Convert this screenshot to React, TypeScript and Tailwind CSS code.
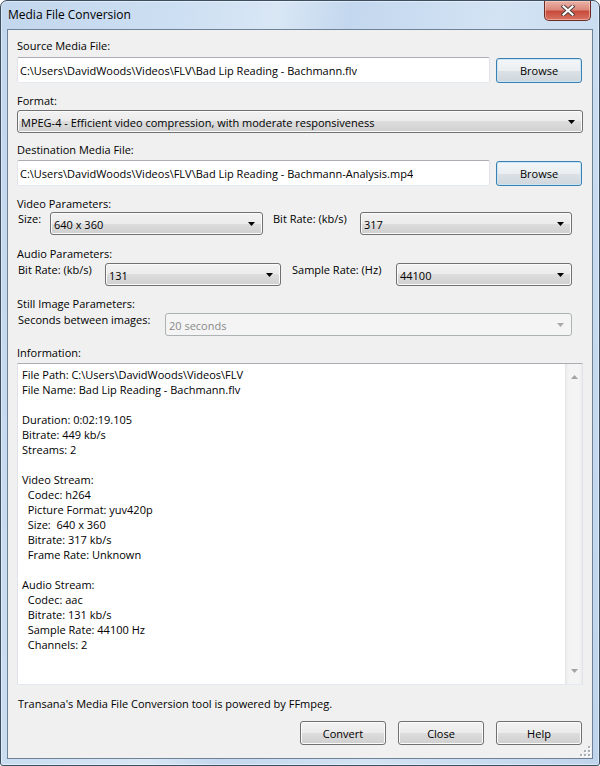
import clsx from "clsx";

const infoLines = [
  "File Path: C:\\Users\\DavidWoods\\Videos\\FLV",
  "File Name: Bad Lip Reading - Bachmann.flv",
  "",
  "Duration: 0:02:19.105",
  "Bitrate: 449 kb/s",
  "Streams: 2",
  "",
  "Video Stream:",
  "  Codec: h264",
  "  Picture Format: yuv420p",
  "  Size:  640 x 360",
  "  Bitrate: 317 kb/s",
  "  Frame Rate: Unknown",
  "",
  "Audio Stream:",
  "  Codec: aac",
  "  Bitrate: 131 kb/s",
  "  Sample Rate: 44100 Hz",
  "  Channels: 2",
];

function Arrow({ up, color }: { up?: boolean; color: string }) {
  return (
    <svg width="7" height="4" viewBox="0 0 7 4" className="shrink-0">
      <path d={up ? "M0 4h7L3.5 0z" : "M0 0h7L3.5 4z"} fill={color} />
    </svg>
  );
}

function Combo({ value, className, disabled }: { value: string; className?: string; disabled?: boolean }) {
  return (
    <div
      className={clsx(
        "flex h-[23px] items-center rounded-[3px] border pl-[3px] pr-[7px]",
        disabled
          ? "border-[#adb2b5] bg-[#f4f4f4] text-[#8a8a8a]"
          : "border-[#707070] bg-[linear-gradient(to_bottom,#f2f2f2_0%,#ebebeb_50%,#dddddd_50%,#cfcfcf_100%)] shadow-[inset_0_0_0_1px_#fbfbfb]",
        className
      )}
    >
      <span className="flex-1 truncate pt-[1px]">{value}</span>
      <Arrow color={disabled ? "#a9a9a9" : "#000"} />
    </div>
  );
}

function TextBox({ value }: { value: string }) {
  return (
    <div className="flex h-[26px] flex-1 items-center rounded-[2px] border border-[#e2e3ea] border-t-[#abadb3] border-b-[#e3e9ef] bg-white pl-[2px]">
      <span className="truncate">{value}</span>
    </div>
  );
}

function Button({ label, focused, className }: { label: string; focused?: boolean; className?: string }) {
  return (
    <div
      className={clsx(
        "flex h-[24px] w-[86px] items-center justify-center rounded-[3px] border",
        focused
          ? "border-[#3c7fb1] bg-[linear-gradient(to_bottom,#f4f7f9_0%,#eaeef1_50%,#dbe1e5_50%,#d0d7dc_100%)] shadow-[inset_0_0_0_1px_#c9e6f6]"
          : "border-[#707070] bg-[linear-gradient(to_bottom,#f2f2f2_0%,#ebebeb_50%,#dddddd_50%,#cfcfcf_100%)] shadow-[inset_0_0_0_1px_#fbfbfb]",
        className
      )}
    >
      {label}
    </div>
  );
}

function CloseBox() {
  return (
    <div className="mr-[8px] flex h-[20px] w-[47px] items-center justify-center rounded-b-[5px] border border-t-0 border-[#6b2a22] bg-[linear-gradient(to_bottom,#eab1a7_0%,#dc8a7c_45%,#c84c3c_55%,#d77262_100%)] shadow-[inset_0_0_0_1px_rgba(255,220,210,0.5)]">
      <svg width="14" height="11" viewBox="0 0 14 11">
        <path d="M2.5 1.5l9 8M11.5 1.5l-9 8" stroke="#4b3b39" strokeWidth="4" strokeLinecap="square" />
        <path d="M2.5 1.5l9 8M11.5 1.5l-9 8" stroke="#fff" strokeWidth="2.2" strokeLinecap="square" />
      </svg>
    </div>
  );
}

function Grip() {
  const dots = [
    [8, 0],
    [8, 4],
    [4, 4],
    [8, 8],
    [4, 8],
    [0, 8],
  ];
  return (
    <svg width="11" height="11" viewBox="0 0 11 11">
      {dots.map(([x, y]) => (
        <g key={`${x}-${y}`}>
          <rect x={x + 1} y={y + 1} width="2" height="2" fill="#fff" />
          <rect x={x} y={y} width="2" height="2" fill="#a9afb6" />
        </g>
      ))}
    </svg>
  );
}

export default function App() {
  return (
    <div className="h-[766px] w-[600px] bg-white font-['Segoe_UI','Open_Sans',sans-serif] text-[11px] leading-[15px] text-black">
      <div className="flex h-full w-full flex-col rounded-t-[7px] rounded-b-[3px] border border-[#3e4e61] bg-[linear-gradient(100deg,#c2d6ed_0%,#cddff2_25%,#d9e7f5_38%,#c3d7ee_48%,#d3e3f4_68%,#bfd4ec_100%)] shadow-[inset_0_0_0_1px_rgba(255,255,255,0.45)]">
        {/* title bar */}
        <div className="flex h-[28px] items-start justify-between">
          <span className="pl-[7px] pt-[6px] text-[12px]">Media File Conversion</span>
          <CloseBox />
        </div>

        {/* client area */}
        <div className="relative mx-[6px] mb-[6px] flex flex-1 flex-col border border-[#6f8197] bg-[#f0f0f0] px-[9px] pt-[8px]">
          <span>Source Media File:</span>
          <div className="mt-[4px] flex items-center gap-[6px]">
            <TextBox value="C:\Users\DavidWoods\Videos\FLV\Bad Lip Reading - Bachmann.flv" />
            <Button label="Browse" focused className="mr-[1px] h-[25px]" />
          </div>

          <span className="mt-[10px]">Format:</span>
          <Combo className="mt-[2px]" value="MPEG-4 - Efficient video compression, with moderate responsiveness" />

          <span className="mt-[9px]">Destination Media File:</span>
          <div className="mt-[3px] flex items-center gap-[6px]">
            <TextBox value="C:\Users\DavidWoods\Videos\FLV\Bad Lip Reading - Bachmann-Analysis.mp4" />
            <Button label="Browse" focused className="mr-[1px] h-[25px]" />
          </div>

          <span className="mt-[10px]">Video Parameters:</span>
          <div className="flex items-start">
            <span className="w-[33px] pl-[1px]">Size:</span>
            <Combo className="mt-[1px] w-[213px]" value="640 x 360" />
            <span className="ml-[10px] w-[87px]">Bit Rate: (kb/s)</span>
            <Combo className="mt-[1px] w-[212px]" value="317" />
          </div>

          <span className="mt-[11px]">Audio Parameters:</span>
          <div className="mt-[1px] flex items-start">
            <span className="w-[88px] pl-[1px]">Bit Rate: (kb/s)</span>
            <Combo className="mt-[1px] w-[176px]" value="131" />
            <span className="ml-[11px] w-[104px]">Sample Rate: (Hz)</span>
            <Combo className="mt-[1px] w-[176px]" value="44100" />
          </div>

          <span className="mt-[10px]">Still Image Parameters:</span>
          <div className="mt-[1px] flex items-start">
            <span className="w-[148px] pl-[1px]">Seconds between images:</span>
            <Combo className="mt-[1px] w-[407px]" value="20 seconds" disabled />
          </div>

          <span className="mt-[9px]">Information:</span>
          <div className="mt-[3px] flex h-[322px] border border-[#e2e3ea] border-t-[#abadb3] border-b-[#e3e9ef] bg-white">
            <div className="flex-1 whitespace-pre pl-[4px] pt-[3px]">
              {infoLines.map((line, i) => (
                <div key={i} className="h-[15px]">
                  {line}
                </div>
              ))}
            </div>
            <div className="flex w-[17px] flex-col items-center justify-between border-l border-[#e6e6e6] bg-[linear-gradient(to_right,#ececec,#f4f4f4_3px,#f4f4f4_13px,#ececec)] py-[11px]">
              <Arrow up color="#a4a4a4" />
              <Arrow color="#a4a4a4" />
            </div>
          </div>

          <span className="mt-[11px] pl-[1px]">Transana's Media File Conversion tool is powered by FFmpeg.</span>

          <div className="mt-[10px] flex justify-end gap-[12px] pr-[1px]">
            <Button label="Convert" />
            <Button label="Close" />
            <Button label="Help" />
          </div>

          <div className="absolute bottom-[1px] right-[1px]">
            <Grip />
          </div>
        </div>
      </div>
    </div>
  );
}
